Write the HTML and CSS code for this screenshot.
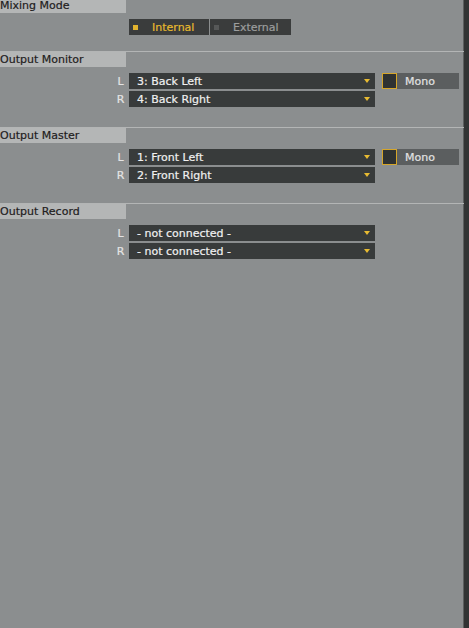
FILE: index.html
```html
<!DOCTYPE html>
<html>
<head>
<meta charset="utf-8">
<link rel="stylesheet" href="styles.css">
</head>
<body>
<div class="panel">
  <section class="section first">
    <div class="head">Mixing Mode</div>
    <div class="body">
      <div class="row">
        <div class="toggle">
          <div class="seg on"><span class="ind"></span><span>Internal</span></div>
          <div class="seg"><span class="ind"></span><span>External</span></div>
        </div>
      </div>
    </div>
  </section>
  <section class="section">
    <div class="head">Output Monitor</div>
    <div class="body">
      <div class="row">
        <span class="ch">L</span>
        <div class="select"><span>3: Back Left</span><span class="arrow"></span></div>
        <div class="mono"><span class="box"></span><span class="mono-label">Mono</span></div>
      </div>
      <div class="row">
        <span class="ch">R</span>
        <div class="select"><span>4: Back Right</span><span class="arrow"></span></div>
      </div>
    </div>
  </section>
  <section class="section">
    <div class="head">Output Master</div>
    <div class="body">
      <div class="row">
        <span class="ch">L</span>
        <div class="select"><span>1: Front Left</span><span class="arrow"></span></div>
        <div class="mono"><span class="box"></span><span class="mono-label">Mono</span></div>
      </div>
      <div class="row">
        <span class="ch">R</span>
        <div class="select"><span>2: Front Right</span><span class="arrow"></span></div>
      </div>
    </div>
  </section>
  <section class="section last">
    <div class="head">Output Record</div>
    <div class="body">
      <div class="row">
        <span class="ch">L</span>
        <div class="select"><span>- not connected -</span><span class="arrow"></span></div>
      </div>
      <div class="row">
        <span class="ch">R</span>
        <div class="select"><span>- not connected -</span><span class="arrow"></span></div>
      </div>
    </div>
  </section>
</div>
</body>
</html>
```
FILE: styles.css
```css
html, body {
  margin: 0;
  padding: 0;
  height: 100%;
  background: #8b8e8f;
}
body {
  font-family: "DejaVu Sans", Verdana, sans-serif;
  font-size: 11px;
  -webkit-text-stroke: 0.2px currentColor;
  overflow: hidden;
}
.panel {
  width: 464px;
  height: 628px;
  border-right: 5px solid #323434;
  box-shadow: inset -1px 0 0 #5c5f5f;
}
.section {
  border-bottom: 1px solid #b3b5b5;
  padding-bottom: 20px;
}
.section.first {
  padding-bottom: 16px;
}
.section.last {
  border-bottom: none;
}
.head {
  width: 126px;
  height: 15px;
  line-height: 16px;
  background: #b4b6b6;
  color: #1f2020;
  box-sizing: border-box;
  white-space: nowrap;
}
.section.first .head {
  height: 13px;
  line-height: 12px;
}
.body {
  padding-top: 6px;
  display: flex;
  flex-direction: column;
  gap: 2px;
}
.row {
  display: flex;
  align-items: center;
  padding-left: 112px;
  height: 16px;
}
.section.first .row {
  padding-left: 129px;
}
.ch {
  width: 17px;
  text-align: center;
  color: #e4e4e4;
  line-height: 17px;
}
.select {
  width: 246px;
  height: 16px;
  line-height: 17px;
  background: #383b3b;
  color: #f0f0f0;
  display: flex;
  align-items: center;
  justify-content: space-between;
  padding: 0 5px 0 8px;
  box-sizing: border-box;
}
.arrow {
  width: 0;
  height: 0;
  border-left: 3px solid transparent;
  border-right: 3px solid transparent;
  border-top: 4px solid #e8bb32;
}
.mono {
  margin-left: 7px;
  display: flex;
  height: 16px;
}
.box {
  width: 15px;
  height: 16px;
  box-sizing: border-box;
  border: 1px solid #d6a62a;
  background: #2f3232;
}
.mono-label {
  width: 62px;
  height: 16px;
  line-height: 18px;
  background: #5b5e5f;
  color: #e2e2e2;
  padding-left: 8px;
  box-sizing: border-box;
}
.toggle {
  display: flex;
  height: 16px;
  gap: 1px;
  background: #8b8e8f;
}
.seg {
  width: 80px;
  height: 16px;
  line-height: 17px;
  background: #3a3c3c;
  display: flex;
  align-items: center;
  color: #9c9e9e;
}
.seg + .seg {
  width: 81px;
}
.ind {
  width: 5px;
  height: 5px;
  background: #565858;
  margin-left: 4px;
  margin-right: 14px;
}
.seg.on {
  color: #e6b92e;
}
.seg.on .ind {
  background: #e1b32e;
}
```
